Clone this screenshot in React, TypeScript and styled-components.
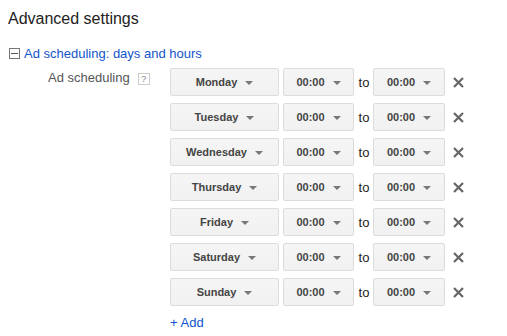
import React from 'react';
import styled, { createGlobalStyle } from 'styled-components';

const GlobalStyle = createGlobalStyle`
  body {
    margin: 0;
    background: #fff;
    font-family: "Liberation Sans", Arial, sans-serif;
  }
`;

const DAYS = ['Monday', 'Tuesday', 'Wednesday', 'Thursday', 'Friday', 'Saturday', 'Sunday'];

const Page = styled.div`
  padding: 9px 8px 0 8px;
`;

const Title = styled.h2`
  margin: 0;
  font-size: 16px;
  line-height: 20px;
  font-weight: normal;
  color: #222;
`;

const Toggle = styled.div`
  display: flex;
  align-items: center;
  gap: 4px;
  margin-top: 15px;
  height: 18px;
`;

const ExpandBox = styled.span`
  box-sizing: border-box;
  width: 11px;
  height: 11px;
  border: 1px solid #777;
  display: flex;
  align-items: center;
  justify-content: center;
  margin-left: 1px;
  &::after {
    content: '';
    width: 7px;
    height: 1px;
    background: #555;
  }
`;

const Link = styled.a`
  font-size: 13px;
  color: #15c;
  text-decoration: none;
  cursor: pointer;
`;

const Body = styled.div`
  display: grid;
  grid-template-columns: 162px auto;
  margin-top: 6px;
`;

const Label = styled.div`
  display: flex;
  align-items: flex-start;
  gap: 8px;
  padding: 2px 0 0 40px;
  font-size: 13px;
  line-height: 16px;
  color: #555;
`;

const Help = styled.span`
  box-sizing: border-box;
  margin-top: 3px;
  width: 12px;
  height: 12px;
  border: 1px solid #ccc;
  font-size: 9px;
  line-height: 10px;
  text-align: center;
  color: #888;
`;

const Rows = styled.div`
  display: flex;
  flex-direction: column;
  gap: 7px;
`;

const Row = styled.div`
  display: flex;
  align-items: center;
`;

const Select = styled.div<{ $w: number }>`
  box-sizing: border-box;
  width: ${p => p.$w}px;
  height: 28px;
  display: flex;
  align-items: center;
  justify-content: center;
  gap: 8px;
  background: linear-gradient(#f5f5f5, #f1f1f1);
  border: 1px solid #dcdcdc;
  border-radius: 2px;
  font-size: 11px;
  font-weight: bold;
  color: #444;
  &::after {
    content: '';
    border-left: 4px solid transparent;
    border-right: 4px solid transparent;
    border-top: 4px solid #777;
    margin-top: 1px;
  }
`;

const To = styled.span`
  font-size: 13px;
  color: #222;
  width: 18px;
  padding-left: 1px;
`;

const Remove = styled.button`
  border: 0;
  background: none;
  padding: 0;
  margin-left: 7px;
  width: 12px;
  height: 12px;
  display: flex;
  align-items: center;
  justify-content: center;
  cursor: pointer;
`;

const Add = styled(Link)`
  display: block;
  margin-top: 9px;
`;

const Cross = () => (
  <svg width="11" height="11" viewBox="0 0 11 11">
    <path d="M1 1L10 10M10 1L1 10" stroke="#666" strokeWidth="2.2" />
  </svg>
);

const ScheduleRow = ({ day }: { day: string }) => (
  <Row>
    <Select $w={109}>{day}</Select>
    <Select $w={71} style={{ marginLeft: 4 }}>00:00</Select>
    <To>&nbsp;to</To>
    <Select $w={72}>00:00</Select>
    <Remove aria-label="Remove">
      <Cross />
    </Remove>
  </Row>
);

export default function App() {
  return (
    <>
      <GlobalStyle />
      <Page>
        <Title>Advanced settings</Title>
        <Toggle>
          <ExpandBox />
          <Link>Ad scheduling: days and hours</Link>
        </Toggle>
        <Body>
          <Label>
            Ad scheduling <Help>?</Help>
          </Label>
          <div>
            <Rows>
              {DAYS.map(d => (
                <ScheduleRow key={d} day={d} />
              ))}
            </Rows>
            <Add>+ Add</Add>
          </div>
        </Body>
      </Page>
    </>
  );
}
